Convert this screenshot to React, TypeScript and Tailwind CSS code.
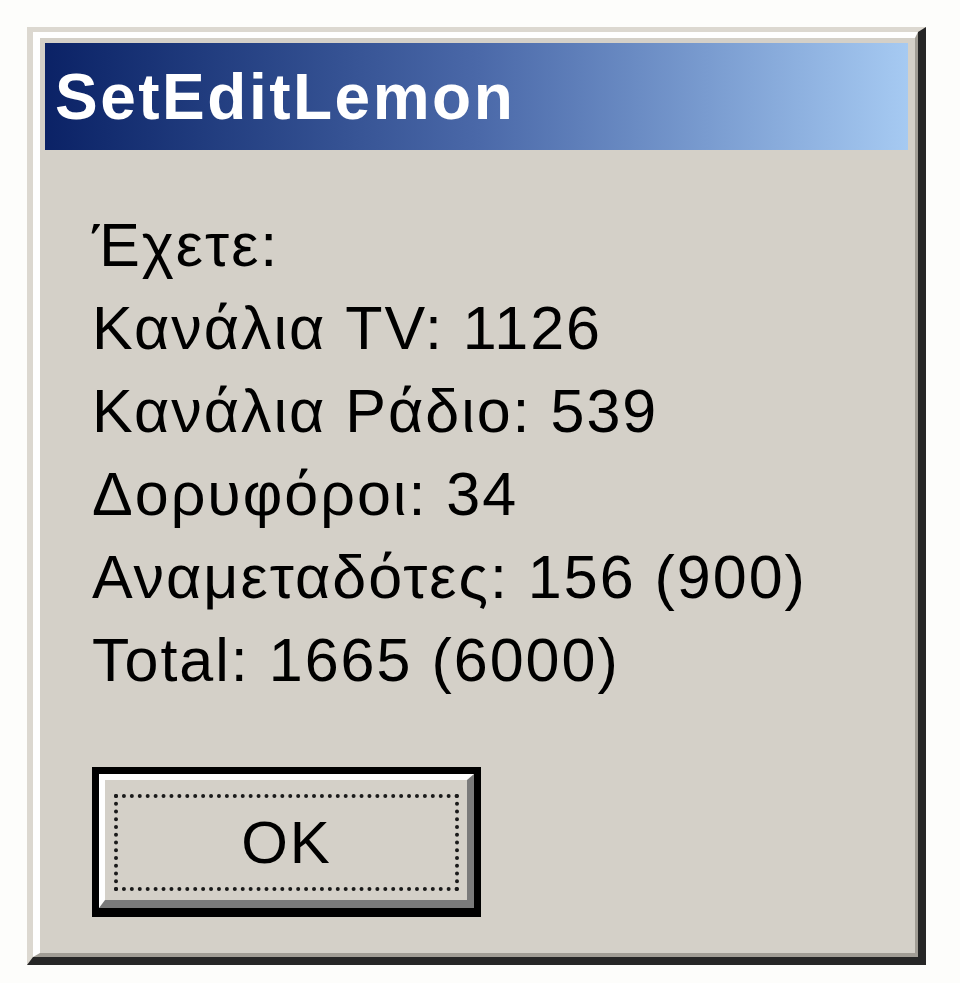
export default function App() {
  const lines = [
    'Έχετε:',
    'Κανάλια TV: 1126',
    'Κανάλια Ράδιο: 539',
    'Δορυφόροι: 34',
    'Αναμεταδότες: 156 (900)',
    'Total: 1665 (6000)',
  ];

  return (
    <div className="min-h-screen bg-[#fdfdfb] pl-[27px] pt-[27px]" style={{ fontFamily: '"Liberation Sans", Arial, sans-serif' }}>
      <div className="w-[899px] border-t-[5px] border-l-[6px] border-r-[8px] border-b-[8px] border-t-[#dcd8d0] border-l-[#dcd8d0] border-r-[#262626] border-b-[#262626]">
        <div className="border-t-[6px] border-l-[7px] border-r-[3px] border-b-[4px] border-t-white border-l-white border-r-[#a19d95] border-b-[#a19d95] bg-[#d4d0c8] pl-[5px] pr-[7px] pt-[5px]">
          <div className="h-[107px] flex items-center pl-[10px] bg-gradient-to-r from-[#0b2266] via-[#4a68a8] to-[#a6caf2]">
            <span className="text-white font-bold text-[64px] leading-none tracking-[2.5px]">SetEditLemon</span>
          </div>

          <div className="pl-[47px] pt-[54px] pb-[36px]">
            <div className="text-black text-[61px] leading-[83px] tracking-[2px]">
              {lines.map((l) => (
                <div key={l}>{l}</div>
              ))}
            </div>

            <div className="mt-[65px] w-[389px] h-[150px] border-[7px] border-b-[9px] border-black">
              <div className="h-full flex border-t-[6px] border-l-[6px] border-r-[7px] border-b-[8px] border-t-white border-l-white border-r-[#7a7a7a] border-b-[#7a7a7a] bg-[#d4d0c8] pl-[9px] pt-[14px] pr-[8px] pb-[9px]">
                <div className="flex-1 flex items-center justify-center border-[4px] border-dotted border-[#1a1a1a]">
                  <span className="text-[60px] leading-none text-black tracking-[2px]">OK</span>
                </div>
              </div>
            </div>
          </div>
        </div>
      </div>
    </div>
  );
}
